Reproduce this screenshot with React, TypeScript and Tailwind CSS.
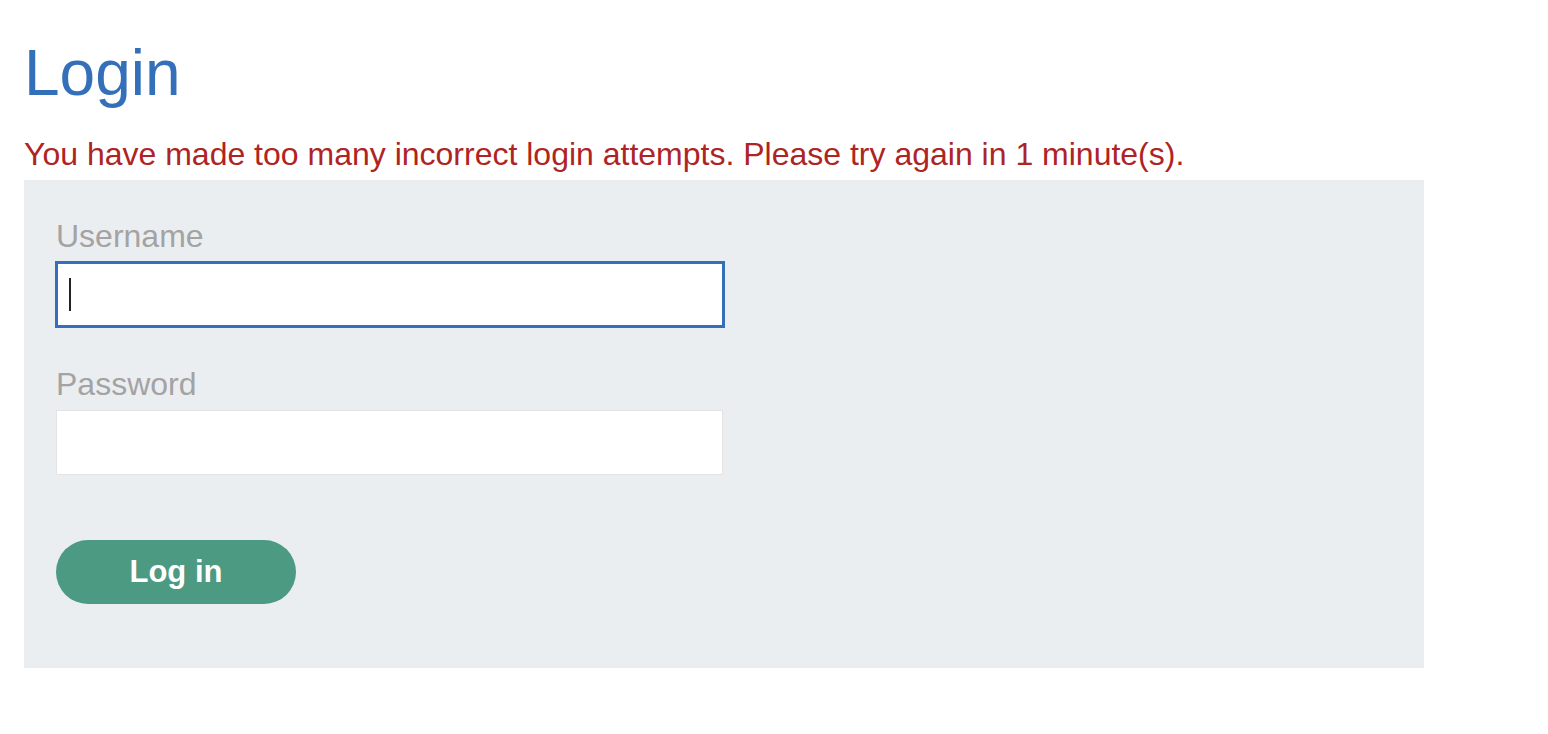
export default function App() {
  return (
    <div className="min-h-screen bg-white pl-6 pt-[36px] font-['Liberation_Sans',Arial,sans-serif]">
      <h1 className="text-[64px] leading-[74px] text-[#3370b9]">Login</h1>
      <p className="mt-[22px] mb-1 text-[32px] leading-[44px] text-[#ae2424]">
        You have made too many incorrect login attempts. Please try again in 1 minute(s).
      </p>
      <section className="w-[1400px] bg-[#ebeef1] pl-8 pt-[38px] pb-[64px]">
        <form className="flex flex-col items-start" onSubmit={(e) => e.preventDefault()}>
          <label className="text-[32px] leading-[37px] text-[#a3a3a3]">Username</label>
          <div className="relative mt-[6px] ml-[-1px]">
            <input
              autoFocus
              className="block h-[67px] w-[670px] border-[3px] border-[#3370b9] bg-white px-3 text-[28px] outline-none"
            />
            <span className="absolute left-[14px] top-[17px] h-[33px] w-[2px] bg-[#222]" />
          </div>
          <label className="mt-[38px] text-[32px] leading-[37px] text-[#a3a3a3]">Password</label>
          <input
            type="password"
            className="mt-[7px] h-[65px] w-[667px] border border-[#e3e3e3] bg-white px-3 text-[28px] outline-none"
          />
          <button className="mt-[65px] h-[64px] w-[240px] rounded-full bg-[#4c9a82] text-[31px] font-bold text-white">
            Log in
          </button>
        </form>
      </section>
    </div>
  );
}
